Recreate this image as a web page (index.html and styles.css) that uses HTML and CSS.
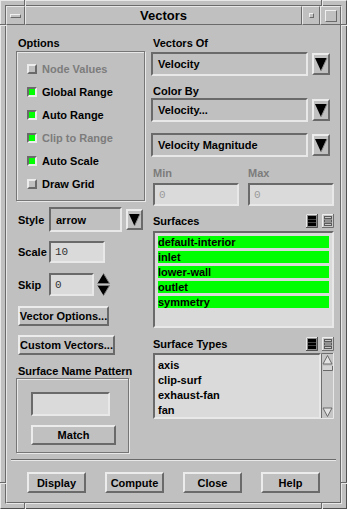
FILE: index.html
```html
<!DOCTYPE html>
<html>
<head>
<meta charset="utf-8">
<title>Vectors</title>
<link rel="stylesheet" href="styles.css">
</head>
<body>
<div class="window">
  <div class="tick tv" style="left:23px;top:-1px"></div>
  <div class="tick tv" style="left:320px;top:-1px"></div>
  <div class="tick tv" style="left:23px;bottom:-1px"></div>
  <div class="tick tv" style="left:320px;bottom:-1px"></div>
  <div class="tick th" style="left:-1px;top:23px"></div>
  <div class="tick th" style="right:-1px;top:23px"></div>
  <div class="tick th" style="left:-1px;top:481px"></div>
  <div class="tick th" style="right:-1px;top:481px"></div>
  <div class="inner">
    <div class="titlebar">
      <div class="tb tb-menu"><span class="menu-bar"></span></div>
      <div class="tb tb-title">Vectors</div>
      <div class="tb tb-min"><span class="min-sq"></span></div>
      <div class="tb tb-max"><span class="max-sq"></span></div>
    </div>
    <div class="content">
      <div class="main">
        <div class="col">
          <div class="label">Options</div>
          <div class="group options">
            <div class="check-row disabled"><span class="cb"></span>Node Values</div>
            <div class="check-row"><span class="cb on"></span>Global Range</div>
            <div class="check-row"><span class="cb on"></span>Auto Range</div>
            <div class="check-row disabled"><span class="cb on"></span>Clip to Range</div>
            <div class="check-row"><span class="cb on"></span>Auto Scale</div>
            <div class="check-row"><span class="cb"></span>Draw Grid</div>
          </div>
          <div class="form-row style-row">
            <span class="row-label">Style</span>
            <div class="drop drop-style">arrow</div>
            <div class="arrow-btn small">
              <svg width="13" height="17" viewBox="0 0 13 17"><polygon points="1,3 12,3 6.5,15" fill="#000"/><path d="M12,3 L6.5,15" stroke="#8a8a8a" stroke-width="1"/></svg>
            </div>
          </div>
          <div class="form-row scale-row">
            <span class="row-label">Scale</span>
            <div class="input input-scale">10</div>
          </div>
          <div class="form-row skip-row">
            <span class="row-label">Skip</span>
            <div class="input input-skip">0</div>
            <svg class="spinner" width="13" height="23" viewBox="0 0 13 23">
              <polygon points="6.5,0.5 12.5,10.5 0.5,10.5" fill="#000"/>
              <path d="M6.5,0.5 L12.5,10.5 L0.5,10.5" fill="none" stroke="#7a7a7a" stroke-width="1"/>
              <polygon points="0.5,12.5 12.5,12.5 6.5,22.5" fill="#000"/>
              <path d="M0.5,12.5 L12.5,12.5 L6.5,22.5" fill="none" stroke="#7a7a7a" stroke-width="1"/>
            </svg>
          </div>
          <div class="btn btn-vopt">Vector Options...</div>
          <div class="btn btn-cvec">Custom Vectors...</div>
          <div class="label snp-label">Surface Name Pattern</div>
          <div class="group snp">
            <div class="input snp-input"></div>
            <div class="btn btn-match">Match</div>
          </div>
        </div>
        <div class="col">
          <div class="label">Vectors Of</div>
          <div class="drop-row first">
            <div class="drop drop-wide">Velocity</div>
            <div class="arrow-btn">
              <svg width="14" height="18" viewBox="0 0 14 18"><polygon points="1,3 13,3 7,16" fill="#000"/><path d="M13,3 L7,16" stroke="#8a8a8a" stroke-width="1"/></svg>
            </div>
          </div>
          <div class="label colorby">Color By</div>
          <div class="drop-row">
            <div class="drop drop-wide">Velocity...</div>
            <div class="arrow-btn">
              <svg width="14" height="18" viewBox="0 0 14 18"><polygon points="1,3 13,3 7,16" fill="#000"/><path d="M13,3 L7,16" stroke="#8a8a8a" stroke-width="1"/></svg>
            </div>
          </div>
          <div class="drop-row third">
            <div class="drop drop-wide">Velocity Magnitude</div>
            <div class="arrow-btn">
              <svg width="14" height="18" viewBox="0 0 14 18"><polygon points="1,3 13,3 7,16" fill="#000"/><path d="M13,3 L7,16" stroke="#8a8a8a" stroke-width="1"/></svg>
            </div>
          </div>
          <div class="minmax-labels">
            <span class="label disabled-text">Min</span>
            <span class="label disabled-text">Max</span>
          </div>
          <div class="minmax">
            <div class="input input-dis">0</div>
            <div class="input input-dis">0</div>
          </div>
          <div class="list-head surfaces-head">
            <span class="label">Surfaces</span>
            <span class="icons">
              <svg width="12" height="14" viewBox="0 0 12 14"><rect width="12" height="14" fill="#8a8a8a"/><path d="M0.5,14 V0.5 H12" fill="none" stroke="#e8e8e8"/><path d="M11.5,0 V13.5 H0" fill="none" stroke="#505050"/><rect x="2" y="2" width="8" height="3" fill="#000"/><rect x="2" y="5.5" width="8" height="3" fill="#000"/><rect x="2" y="9" width="8" height="3" fill="#000"/></svg>
              <svg width="12" height="14" viewBox="0 0 12 14"><rect width="12" height="14" fill="#c8c8c8"/><path d="M0.5,14 V0.5 H12" fill="none" stroke="#eeeeee"/><path d="M11.5,0 V13.5 H0" fill="none" stroke="#6e6e6e"/><rect x="2.5" y="2.5" width="7" height="2" fill="none" stroke="#5a5a5a"/><rect x="2.5" y="6" width="7" height="2" fill="none" stroke="#5a5a5a"/><rect x="2.5" y="9.5" width="7" height="2" fill="none" stroke="#5a5a5a"/></svg>
            </span>
          </div>
          <div class="list surfaces">
            <div class="item sel">default-interior</div>
            <div class="item sel">inlet</div>
            <div class="item sel">lower-wall</div>
            <div class="item sel">outlet</div>
            <div class="item sel">symmetry</div>
          </div>
          <div class="list-head types-head">
            <span class="label">Surface Types</span>
            <span class="icons">
              <svg width="12" height="14" viewBox="0 0 12 14"><rect width="12" height="14" fill="#8a8a8a"/><path d="M0.5,14 V0.5 H12" fill="none" stroke="#e8e8e8"/><path d="M11.5,0 V13.5 H0" fill="none" stroke="#505050"/><rect x="2" y="2" width="8" height="3" fill="#000"/><rect x="2" y="5.5" width="8" height="3" fill="#000"/><rect x="2" y="9" width="8" height="3" fill="#000"/></svg>
              <svg width="12" height="14" viewBox="0 0 12 14"><rect width="12" height="14" fill="#c8c8c8"/><path d="M0.5,14 V0.5 H12" fill="none" stroke="#eeeeee"/><path d="M11.5,0 V13.5 H0" fill="none" stroke="#6e6e6e"/><rect x="2.5" y="2.5" width="7" height="2" fill="none" stroke="#5a5a5a"/><rect x="2.5" y="6" width="7" height="2" fill="none" stroke="#5a5a5a"/><rect x="2.5" y="9.5" width="7" height="2" fill="none" stroke="#5a5a5a"/></svg>
            </span>
          </div>
          <div class="list-wrap">
            <div class="list types">
              <div class="item">axis</div>
              <div class="item">clip-surf</div>
              <div class="item">exhaust-fan</div>
              <div class="item">fan</div>
            </div>
            <svg class="scrollbar" width="13" height="66" viewBox="0 0 13 66">
              <rect width="13" height="66" fill="#c6c6c6"/>
              <path d="M0.5,66 V0.5 H13" fill="none" stroke="#6e6e6e"/>
              <path d="M12.5,0 V65.5 H0" fill="none" stroke="#e8e8e8"/>
              <polygon points="6.5,2.5 11,11 2,11" fill="#e2e2e2" stroke="#6a6a6a"/>
              <rect x="2" y="13" width="9" height="4" fill="#d4d4d4"/>
              <path d="M2,17.5 H11.5 V13" fill="none" stroke="#6a6a6a"/>
              <polygon points="2,55 11,55 6.5,63.5" fill="#e2e2e2" stroke="#6a6a6a"/>
            </svg>
          </div>
        </div>
      </div>
      <div class="sep"></div>
      <div class="actions">
        <div class="btn act">Display</div>
        <div class="btn act">Compute</div>
        <div class="btn act">Close</div>
        <div class="btn act">Help</div>
      </div>
    </div>
  </div>
</div>
</body>
</html>
```

FILE: styles.css
```css
html, body {
  margin: 0;
  padding: 0;
  background: #c0c0c0;
}
body {
  font-family: "Liberation Sans", Arial, Helvetica, sans-serif;
  font-size: 11px;
  font-weight: bold;
  color: #000;
}
.window {
  position: relative;
  width: 347px;
  height: 509px;
  box-sizing: border-box;
  background: #c0c0c0;
  border: 1px solid;
  border-color: #e8e8e8 #505050 #505050 #e8e8e8;
  padding: 4px;
}
.tick {
  position: absolute;
  box-sizing: border-box;
}
.tv {
  width: 2px;
  height: 6px;
  border-left: 1px solid #6a6a6a;
  border-right: 1px solid #e8e8e8;
}
.th {
  width: 6px;
  height: 2px;
  border-top: 1px solid #6a6a6a;
  border-bottom: 1px solid #e8e8e8;
}
.inner {
  height: 100%;
  box-sizing: border-box;
  border: 1px solid;
  border-color: #6a6a6a #e8e8e8 #e8e8e8 #6a6a6a;
  display: flex;
  flex-direction: column;
}
.titlebar {
  display: flex;
  height: 19px;
  flex: none;
}
.tb {
  box-sizing: border-box;
  border: 1px solid;
  border-color: #e8e8e8 #6a6a6a #6a6a6a #e8e8e8;
  display: flex;
  align-items: center;
  justify-content: center;
}
.tb-menu { width: 19px; }
.tb-title {
  flex: 1;
  font-size: 13px;
  font-weight: bold;
}
.tb-min { width: 18px; }
.tb-max { width: 21px; }
.menu-bar {
  width: 11px;
  height: 4px;
  box-sizing: border-box;
  border: 1px solid;
  border-color: #f0f0f0 #6a6a6a #6a6a6a #f0f0f0;
}
.min-sq {
  width: 5px;
  height: 5px;
  box-sizing: border-box;
  border: 1px solid;
  border-color: #f0f0f0 #6a6a6a #6a6a6a #f0f0f0;
}
.max-sq {
  width: 12px;
  height: 12px;
  box-sizing: border-box;
  border: 1px solid;
  border-color: #f0f0f0 #6a6a6a #6a6a6a #f0f0f0;
}
.content {
  flex: 1;
  box-sizing: border-box;
  border: 1px solid;
  border-color: #e8e8e8 #6a6a6a #6a6a6a #e8e8e8;
  border-top: none;
  display: flex;
  flex-direction: column;
}
.main {
  display: grid;
  grid-template-columns: 129px 183px;
  column-gap: 6px;
  padding: 12px 6px 0 9px;
  height: 434px;
  box-sizing: border-box;
}
.col {
  display: flex;
  flex-direction: column;
  align-items: flex-start;
}
.label {
  display: block;
  line-height: 13px;
  height: 13px;
  padding-left: 2px;
  white-space: nowrap;
}
.group {
  box-sizing: border-box;
  border: 1px solid #767676;
  box-shadow: inset 1px 1px 0 #e8e8e8, 1px 1px 0 #e8e8e8;
}
.options {
  margin-top: 1px;
  width: 129px;
  height: 150px;
  padding: 5px 0 5px 10px;
}
.check-row {
  height: 23px;
  display: flex;
  align-items: center;
  gap: 5px;
  white-space: nowrap;
}
.disabled, .disabled-text {
  color: #7c7c7c;
}
.cb {
  width: 10px;
  height: 10px;
  box-sizing: border-box;
  border: 2px solid;
  border-color: #ececec #6a6a6a #6a6a6a #ececec;
  background: #c0c0c0;
}
.cb.on {
  border-color: #6a6a6a #ececec #ececec #6a6a6a;
  background: #00ff00;
}
.form-row {
  display: flex;
  align-items: center;
}
.row-label {
  width: 31px;
  padding-left: 2px;
}
.style-row { margin-top: 6px; }
.scale-row { margin-top: 9px; }
.skip-row { margin-top: 10px; }
.drop {
  box-sizing: border-box;
  height: 24px;
  border: 2px solid;
  border-color: #6a6a6a #e8e8e8 #e8e8e8 #6a6a6a;
  padding-left: 5px;
  display: flex;
  align-items: center;
  white-space: nowrap;
}
.drop-style {
  width: 73px;
  height: 25px;
}
.arrow-btn {
  box-sizing: border-box;
  width: 18px;
  height: 22px;
  border: 2px solid;
  border-color: #ececec #6a6a6a #6a6a6a #ececec;
  display: flex;
  align-items: center;
  justify-content: center;
  margin-left: 4px;
}
.arrow-btn.small {
  width: 17px;
  height: 21px;
}
.input {
  box-sizing: border-box;
  border: 2px solid;
  border-color: #6a6a6a #e8e8e8 #e8e8e8 #6a6a6a;
  background: #dadada;
  font-family: "Liberation Mono", "Courier New", monospace;
  font-weight: normal;
  font-size: 11px;
  color: #333;
  padding-left: 4px;
  display: flex;
  align-items: center;
}
.input-scale {
  width: 56px;
  height: 22px;
}
.input-skip {
  width: 45px;
  height: 23px;
}
.spinner {
  margin-left: 3px;
}
.btn {
  box-sizing: border-box;
  border: 2px solid;
  border-color: #ececec #6a6a6a #6a6a6a #ececec;
  display: flex;
  align-items: center;
  justify-content: center;
  white-space: nowrap;
  height: 20px;
}
.btn-vopt {
  margin-top: 10px;
  margin-left: 2px;
  width: 91px;
}
.btn-cvec {
  margin-top: 9px;
  margin-left: 2px;
  width: 97px;
}
.snp-label {
  margin-top: 10px;
}
.snp {
  width: 113px;
  height: 75px;
  padding: 13px 0 0 14px;
}
.snp-input {
  width: 79px;
  height: 24px;
}
.btn-match {
  margin-top: 9px;
  width: 85px;
}
.drop-row {
  display: flex;
  align-items: center;
}
.drop-row.first { margin-top: 2px; }
.drop-row.third { margin-top: 11px; }
.colorby { margin-top: 9px; }
.drop-wide {
  width: 157px;
}
.minmax-labels {
  margin-top: 10px;
  display: grid;
  grid-template-columns: 86px 86px;
  column-gap: 9px;
  padding-left: 0;
}
.minmax {
  margin-top: 3px;
  display: grid;
  grid-template-columns: 86px 86px;
  column-gap: 9px;
  padding-left: 2px;
}
.input-dis {
  height: 23px;
  color: #9a9a9a;
}
.list-head {
  width: 183px;
  display: flex;
  justify-content: space-between;
  align-items: center;
  height: 14px;
}
.surfaces-head { margin-top: 8px; }
.types-head { margin-top: 9px; }
.icons {
  display: flex;
  gap: 4px;
}
.icons svg { display: block; }
.list {
  box-sizing: border-box;
  border: 2px solid;
  border-color: #6a6a6a #e8e8e8 #e8e8e8 #6a6a6a;
  background: #dadada;
  padding: 3px 3px 0 3px;
}
.surfaces {
  margin-top: 3px;
  margin-left: 2px;
  width: 181px;
  height: 97px;
}
.item {
  height: 12px;
  line-height: 12px;
  margin-bottom: 3px;
  white-space: nowrap;
}
.item.sel {
  background: #00ff00;
}
.list-wrap {
  margin-top: 2px;
  margin-left: 2px;
  display: flex;
}
.types {
  width: 168px;
  height: 66px;
  padding-top: 4px;
}
.scrollbar { display: block; }
.sep {
  height: 0;
  border-top: 1px solid #6a6a6a;
  border-bottom: 1px solid #e8e8e8;
  margin: 0 4px;
}
.actions {
  display: flex;
  justify-content: center;
  gap: 19px;
  margin-top: 11px;
}
.btn.act {
  width: 59px;
  height: 21px;
}
```
